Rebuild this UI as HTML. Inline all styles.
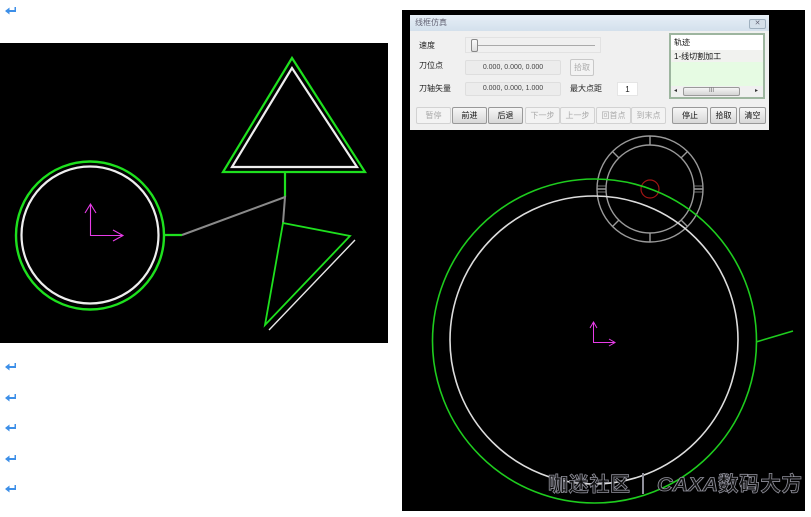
<!DOCTYPE html>
<html><head><meta charset="utf-8">
<style>
html,body{margin:0;padding:0;background:#fff;width:811px;height:517px;overflow:hidden}
svg{position:absolute;left:0;top:0}
text{font-family:"Liberation Sans","Noto Sans CJK SC",sans-serif}
#d{position:absolute;left:410px;top:15px;width:359px;height:115px;background:#f0f0f0;font:8px "Liberation Sans","Noto Sans CJK SC",sans-serif;color:#222;filter:blur(.3px)}
#d div{position:absolute;box-sizing:border-box;white-space:nowrap}
.t{line-height:12px}
.f{background:#ececec;border:1px solid #dedede;border-radius:2px;text-align:center;color:#444;line-height:13px;font-size:7px}
.b{top:92px;height:17px;border:1px solid #999;border-radius:2px;background:linear-gradient(#f6f6f6,#d8d8d8);text-align:center;line-height:15px;color:#111}
.o{border:1px solid #d2d2d2;background:#f3f3f3;color:#aaa}
</style></head><body>
<svg width="811" height="517" viewBox="0 0 811 517">
<rect x="0" y="43" width="388" height="300" fill="#000"/>
<rect x="402" y="10" width="403" height="501" fill="#000"/>
<g fill="#3d8fe8" stroke="none">
<path d="M5 11l4.500-3.500v2.500h5V7h1.500v5H9.500v2.500z"/>
<path d="M5 367l4.500-3.500v2.500h5v-3h1.500v5H9.500v2.500z"/>
<path d="M5 398l4.500-3.500v2.500h5v-3h1.500v5H9.500v2.500z"/>
<path d="M5 428l4.500-3.500v2.500h5v-3h1.500v5H9.500v2.500z"/>
<path d="M5 459l4.500-3.500v2.500h5v-3h1.500v5H9.500v2.500z"/>
<path d="M5 489l4.500-3.500v2.500h5v-3h1.500v5H9.500v2.500z"/>
</g>
<!-- left drawing -->
<g fill="none">
<circle cx="90" cy="235" r="68.500" stroke="#eee" stroke-width="2.200"/>
<circle cx="90" cy="235.500" r="74" stroke="#1ee01e" stroke-width="2.400"/>
<path d="M292 68L232 167H357Z" stroke="#eee" stroke-width="2.200"/>
<path d="M292 58L223 172H365Z" stroke="#1ee01e" stroke-width="2.200"/>
<path d="M285 172V197M164 235H182" stroke="#1ee01e" stroke-width="2.200"/>
<path d="M182 235L285 197L283 223" stroke="#8a8a8a" stroke-width="2"/>
<path d="M283 223L350 236L265 325Z" stroke="#1ee01e" stroke-width="1.800"/>
<path d="M355 240L269 330" stroke="#e8e8e8" stroke-width="1.400"/>
<path d="M90.500 204V235.500H123M85 213L90.500 204L96 213M113 230L123 235.500L113 241" stroke="#e83ce8" stroke-width="1.100"/>
</g>
<!-- right drawing -->
<g fill="none">
<circle cx="650" cy="189" r="53" stroke="#9a9a9a" stroke-width="1.400"/>
<circle cx="650" cy="189" r="44" stroke="#9a9a9a" stroke-width="1.400"/>
<path d="M650 136V145M650 233V242M597 189H606M694 189H703M612.500 151.500L619 158M681 158L687.500 151.500M612.500 226.500L619 220M681 220L687.500 226.500" stroke="#9a9a9a" stroke-width="1.400"/>
<path d="M597 186H606M597 192H606M694 186H703M694 192H703" stroke="#9a9a9a" stroke-width=".8"/>
<circle cx="650" cy="189" r="9" stroke="#a01414" stroke-width="1.200"/>
<circle cx="594" cy="340" r="144" stroke="#ddd" stroke-width="1.600"/>
<circle cx="594.500" cy="341" r="162" stroke="#1ecc1e" stroke-width="1.600"/>
<path d="M756 342L793 331" stroke="#1ecc1e" stroke-width="1.600"/>
<path d="M593.500 322V342.500H615M590 328L593.500 322L597 328M609 339L615 342.500L609 346" stroke="#e83ce8" stroke-width="1"/>
</g>
<text x="548" y="491" font-size="20" textLength="82" fill="#111" stroke="#8f8f9a" stroke-width=".8" font-weight="bold">咖迷社区</text>
<rect x="642" y="473" width="2" height="21" fill="#8f8f9a"/>
<text x="657" y="491" font-size="19" textLength="61" lengthAdjust="spacingAndGlyphs" fill="#111" stroke="#8f8f9a" stroke-width=".8" font-weight="bold" font-style="italic">CAXA</text>
<text x="718" y="491" font-size="20.500" textLength="84" fill="#111" stroke="#8f8f9a" stroke-width=".8" font-weight="bold">数码大方</text>
</svg>
<div id="d">
<div style="left:0;top:0;width:359px;height:16px;background:linear-gradient(#e6eef6,#d3e0ec)"></div>
<div class="t" style="left:5px;top:2px;color:#667">线框仿真</div>
<div style="left:339px;top:4px;width:17px;height:10px;border:1px solid #9fb0bf;border-radius:2px;background:#d5e0ea;text-align:center;line-height:8px;color:#667;font-size:7px">✕</div>
<div class="t" style="left:9px;top:25px">速度</div>
<div style="left:55px;top:22px;width:136px;height:16px;border:1px solid #e2e2e2"></div>
<div style="left:61px;top:30px;width:124px;height:1px;background:#aaa"></div>
<div style="left:61px;top:24px;width:7px;height:13px;border:1px solid #888;border-radius:2px;background:linear-gradient(#fafafa,#ddd)"></div>
<div class="t" style="left:9px;top:45px">刀位点</div>
<div class="f" style="left:55px;top:45px;width:96px;height:15px">0.000, 0.000, 0.000</div>
<div class="f" style="left:160px;top:44px;width:24px;height:17px;background:#f3f3f3;border-color:#c8c8c8;color:#aaa;line-height:15px;font-size:8px">拾取</div>
<div class="t" style="left:9px;top:68px">刀轴矢量</div>
<div class="f" style="left:55px;top:67px;width:96px;height:14px;line-height:12px">0.000, 0.000, 1.000</div>
<div class="t" style="left:160px;top:68px">最大点距</div>
<div style="left:207px;top:67px;width:21px;height:14px;background:#fff;text-align:center;line-height:13px;border:1px solid #e5e5e5">1</div>
<div style="left:259px;top:18px;width:96px;height:66px;border:2px solid #9db59f;background:#e6fbe3"></div>
<div style="left:261px;top:20px;width:92px;height:15px;background:#fff;padding-left:3px;line-height:15px;color:#111">轨迹</div>
<div style="left:261px;top:35px;width:92px;height:12px;background:#f1f2ef"></div>
<div style="left:264px;top:36px;line-height:12px;color:#111">1-线切割加工</div>
<div style="left:261px;top:71px;width:92px;height:11px;background:#f0f0f0"></div>
<div style="left:273px;top:72px;width:57px;height:9px;border:1px solid #9a9a9a;border-radius:2px;background:linear-gradient(#f4f4f4,#d4d4d4);text-align:center;line-height:6px;font-size:6px;color:#666">III</div>
<div style="left:264px;top:72px;line-height:9px;font-size:6px;color:#333">◂</div>
<div style="left:345px;top:72px;line-height:9px;font-size:6px;color:#333">▸</div>
<div class="b o" style="left:6px;width:35px">暂停</div>
<div class="b" style="left:42px;width:35px">前进</div>
<div class="b" style="left:78px;width:35px">后退</div>
<div class="b o" style="left:115px;width:35px">下一步</div>
<div class="b o" style="left:150px;width:35px">上一步</div>
<div class="b o" style="left:186px;width:35px">回首点</div>
<div class="b o" style="left:221px;width:35px">到末点</div>
<div class="b" style="left:262px;width:36px">停止</div>
<div class="b" style="left:300px;width:27px">拾取</div>
<div class="b" style="left:329px;width:27px">清空</div>
</div>
</body></html>
